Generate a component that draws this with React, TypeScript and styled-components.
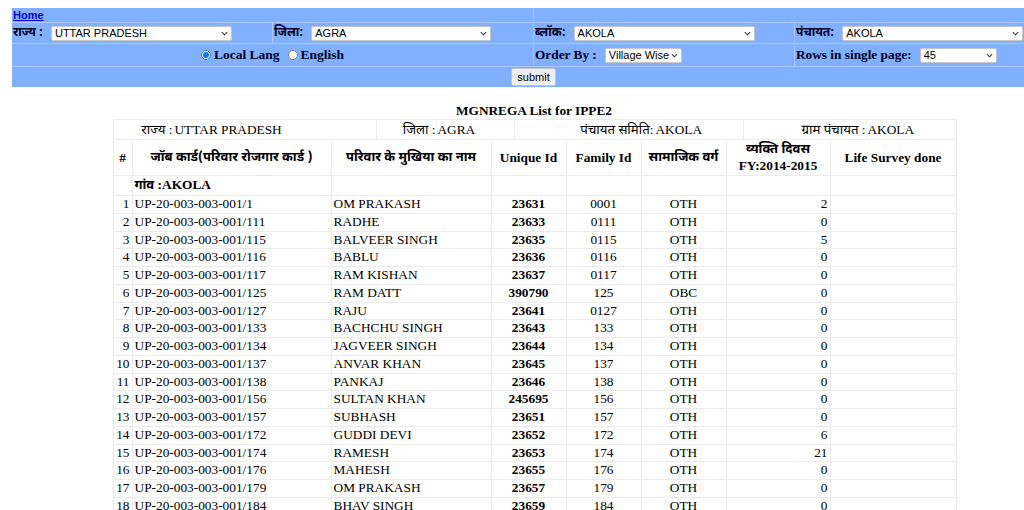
import React from "react";
import styled, { createGlobalStyle } from "styled-components";

interface IRow {
  card: string;
  name: string;
  uid: string;
  fid: string;
  varg: string;
  days: string;
}

const rows: IRow[] = [
  { card: "UP-20-003-003-001/1", name: "OM PRAKASH", uid: "23631", fid: "0001", varg: "OTH", days: "2" },
  { card: "UP-20-003-003-001/111", name: "RADHE", uid: "23633", fid: "0111", varg: "OTH", days: "0" },
  { card: "UP-20-003-003-001/115", name: "BALVEER SINGH", uid: "23635", fid: "0115", varg: "OTH", days: "5" },
  { card: "UP-20-003-003-001/116", name: "BABLU", uid: "23636", fid: "0116", varg: "OTH", days: "0" },
  { card: "UP-20-003-003-001/117", name: "RAM KISHAN", uid: "23637", fid: "0117", varg: "OTH", days: "0" },
  { card: "UP-20-003-003-001/125", name: "RAM DATT", uid: "390790", fid: "125", varg: "OBC", days: "0" },
  { card: "UP-20-003-003-001/127", name: "RAJU", uid: "23641", fid: "0127", varg: "OTH", days: "0" },
  { card: "UP-20-003-003-001/133", name: "BACHCHU SINGH", uid: "23643", fid: "133", varg: "OTH", days: "0" },
  { card: "UP-20-003-003-001/134", name: "JAGVEER SINGH", uid: "23644", fid: "134", varg: "OTH", days: "0" },
  { card: "UP-20-003-003-001/137", name: "ANVAR KHAN", uid: "23645", fid: "137", varg: "OTH", days: "0" },
  { card: "UP-20-003-003-001/138", name: "PANKAJ", uid: "23646", fid: "138", varg: "OTH", days: "0" },
  { card: "UP-20-003-003-001/156", name: "SULTAN KHAN", uid: "245695", fid: "156", varg: "OTH", days: "0" },
  { card: "UP-20-003-003-001/157", name: "SUBHASH", uid: "23651", fid: "157", varg: "OTH", days: "0" },
  { card: "UP-20-003-003-001/172", name: "GUDDI DEVI", uid: "23652", fid: "172", varg: "OTH", days: "6" },
  { card: "UP-20-003-003-001/174", name: "RAMESH", uid: "23653", fid: "174", varg: "OTH", days: "21" },
  { card: "UP-20-003-003-001/176", name: "MAHESH", uid: "23655", fid: "176", varg: "OTH", days: "0" },
  { card: "UP-20-003-003-001/179", name: "OM PRAKASH", uid: "23657", fid: "179", varg: "OTH", days: "0" },
  { card: "UP-20-003-003-001/184", name: "BHAV SINGH", uid: "23659", fid: "184", varg: "OTH", days: "0" },
  { card: "UP-20-003-003-001/185", name: "DHARMVEER", uid: "23660", fid: "185", varg: "OTH", days: "0" },
];

// native-looking select with our own little chevron
const Dropdown = ({ w, value }: { w: number; value: string }) => (
  <SelectWrap w={w}>
    <Select defaultValue={value}>
      <option value={value}>{value}</option>
    </Select>
    <Chevron viewBox="0 0 8 5" width="7" height="5">
      <path d="M1 1 L4 4 L7 1" fill="none" stroke="#3a3a3a" strokeWidth="1.3" />
    </Chevron>
  </SelectWrap>
);

const App = () => {
  return (
    <Page>
      <GlobalStyle />
      <FilterBar>
        <FilterCell span={2} h={15}>
          <HomeLink href="#">Home</HomeLink>
        </FilterCell>
        <FilterCell span={2} h={15} />

        <FilterCell h={21}>
          <Label>राज्य :</Label>
          <Dropdown w={181} value="UTTAR PRADESH" />
        </FilterCell>
        <FilterCell h={21}>
          <Label>जिला:</Label>
          <Dropdown w={180} value="AGRA" />
        </FilterCell>
        <FilterCell h={21}>
          <Label>ब्लॉक:</Label>
          <Dropdown w={181} value="AKOLA" />
        </FilterCell>
        <FilterCell h={21}>
          <Label>पंचायत:</Label>
          <Dropdown w={181} value="AKOLA" />
        </FilterCell>

        <FilterCell span={2} h={23} center>
          <RadioLabel>
            <Radio type="radio" name="lang" defaultChecked />
            Local Lang
          </RadioLabel>
          <RadioLabel>
            <Radio type="radio" name="lang" />
            English
          </RadioLabel>
        </FilterCell>
        <FilterCell h={23}>
          <BoldLabel>Order By :</BoldLabel>
          <Dropdown w={77} value="Village Wise" />
        </FilterCell>
        <FilterCell h={23}>
          <BoldLabel>Rows in single page:</BoldLabel>
          <Dropdown w={77} value="45" />
        </FilterCell>

        <FilterCell span={4} h={20} center last>
          <SubmitBtn type="button">submit</SubmitBtn>
        </FilterCell>
      </FilterBar>

      <Report>
        <Title>MGNREGA List for IPPE2</Title>
        <ListTable>
          <colgroup>
            <col style={{ width: 19 }} />
            <col style={{ width: 199 }} />
            <col style={{ width: 160 }} />
            <col style={{ width: 75 }} />
            <col style={{ width: 75 }} />
            <col style={{ width: 85 }} />
            <col style={{ width: 104 }} />
            <col style={{ width: 126 }} />
          </colgroup>
          <tbody>
            <tr>
              <InfoCell colSpan={8}>
                <InfoRow>
                  <InfoLabel>राज्य :</InfoLabel>
                  <InfoValue>UTTAR PRADESH</InfoValue>
                  <InfoLabel>जिला :</InfoLabel>
                  <InfoValue>AGRA</InfoValue>
                  <InfoLabel>पंचायत समिति:</InfoLabel>
                  <InfoValue>AKOLA</InfoValue>
                  <InfoLabel>ग्राम पंचायत :</InfoLabel>
                  <InfoValue last>AKOLA</InfoValue>
                </InfoRow>
              </InfoCell>
            </tr>
            <tr>
              <Th>#</Th>
              <Th hindi>जॉब कार्ड(परिवार रोजगार कार्ड )</Th>
              <Th hindi>परिवार के मुखिया का नाम</Th>
              <Th>Unique Id</Th>
              <Th>Family Id</Th>
              <Th hindi>सामाजिक वर्ग</Th>
              <Th>
                <HindiLine>व्यक्ति दिवस</HindiLine>
                FY:2014-2015
              </Th>
              <Th>Life Survey done</Th>
            </tr>
            <tr>
              <VillageCell />
              <VillageCell>
                <HindiLine>गांव </HindiLine>:AKOLA
              </VillageCell>
              <VillageCell />
              <VillageCell />
              <VillageCell />
              <VillageCell />
              <VillageCell />
              <VillageCell />
            </tr>
            {rows.map((r, i) => (
              <tr key={r.card}>
                <Td align="right">{i + 1}</Td>
                <Td>{r.card}</Td>
                <Td>{r.name}</Td>
                <Td align="center" bold>
                  {r.uid}
                </Td>
                <Td align="center">{r.fid}</Td>
                <Td align="center">{r.varg}</Td>
                <Td align="right">{r.days}</Td>
                <Td></Td>
              </tr>
            ))}
          </tbody>
        </ListTable>
      </Report>
    </Page>
  );
};

export default App;

const GlobalStyle = createGlobalStyle`
  html, body {
    margin: 0;
    padding: 0;
    overflow: hidden;
    background: #fff;
  }
  body {
    font-family: "Liberation Serif", "Times New Roman", "Noto Sans Devanagari", serif;
    color: #000;
  }
`;

const Page = styled.div`
  width: 1044px;
  padding: 8px 0 0 12px;
`;

const FilterBar = styled.div`
  display: grid;
  grid-template-columns: repeat(4, 261px);
  background: #80b0ff;
  font-family: "Liberation Sans", Arial, sans-serif;
  color: #000022;
`;

const FilterCell = styled.div<{ span?: number; h: number; center?: boolean; last?: boolean }>`
  grid-column: span ${(p) => p.span || 1};
  height: ${(p) => p.h}px;
  box-sizing: border-box;
  display: flex;
  align-items: center;
  justify-content: ${(p) => (p.center ? "center" : "flex-start")};
  padding: 0 1px;
  border-right: 1px solid #a8c8ff;
  border-bottom: ${(p) => (p.last ? "none" : "1px solid #a8c8ff")};
`;

const HomeLink = styled.a`
  font-size: 11px;
  font-weight: bold;
  color: #0000cc;
  text-decoration: underline;
`;

const Label = styled.span`
  font-family: "Noto Sans Devanagari", "Noto Sans", sans-serif;
  font-size: 12px;
  font-weight: bold;
  margin-right: 8px;
  white-space: nowrap;
`;

const BoldLabel = styled.span`
  font-family: "Liberation Serif", serif;
  font-size: 13.3px;
  font-weight: bold;
  margin-right: 8px;
  white-space: nowrap;
`;

const SelectWrap = styled.span<{ w: number }>`
  position: relative;
  display: inline-flex;
  width: ${(p) => p.w}px;
  height: 15px;
  flex-shrink: 0;
`;

const Select = styled.select`
  appearance: none;
  -webkit-appearance: none;
  width: 100%;
  height: 100%;
  margin: 0;
  padding: 0 12px 0 3px;
  font-family: "Liberation Sans", Arial, sans-serif;
  font-size: 11px;
  line-height: 13px;
  color: #000;
  background: #fff;
  border: 1px solid #c6c6c6;
  border-radius: 2px;
  box-sizing: border-box;
`;

const Chevron = styled.svg`
  position: absolute;
  right: 4px;
  top: 5px;
  pointer-events: none;
`;

const RadioLabel = styled.label`
  display: flex;
  align-items: center;
  font-family: "Liberation Serif", serif;
  font-size: 13.5px;
  font-weight: bold;
  margin-right: 4px;
`;

const Radio = styled.input`
  width: 10px;
  height: 10px;
  margin: 0 3px 0 4px;
  accent-color: #1a73e8;
`;

const SubmitBtn = styled.button`
  height: 18px;
  width: 45px;
  padding: 0;
  font-family: "Liberation Sans", Arial, sans-serif;
  font-size: 11px;
  color: #000;
  background: #efefef;
  border: 1px solid #c4c4c4;
  border-radius: 2px;
`;

const Report = styled.div`
  width: 843px;
  margin: 0 auto;
`;

const Title = styled.div`
  margin-top: 16px;
  text-align: center;
  font-size: 13.3px;
  font-weight: bold;
  line-height: 16px;
`;

const ListTable = styled.table`
  width: 843px;
  table-layout: fixed;
  border-collapse: collapse;
  font-size: 13.33px;

  td,
  th {
    border: 1px solid #ebebeb;
    padding: 0 2px;
  }
`;

const InfoCell = styled.td`
  && {
    padding: 0;
  }
`;

const InfoRow = styled.div`
  display: grid;
  grid-template-columns: 60px 203px 60px 78px 140px 89px 123px 90px;
  height: 19px;
  align-items: center;
`;

const InfoLabel = styled.div`
  text-align: right;
  font-family: "Liberation Serif", "Noto Sans Devanagari", serif;
  font-size: 13.3px;
  white-space: nowrap;
  height: 100%;
  line-height: 19px;
  border-right: 1px solid #f2f2f2;
`;

const InfoValue = styled.div<{ last?: boolean }>`
  text-align: left;
  font-size: 13.3px;
  height: 100%;
  line-height: 19px;
  padding-left: 1px;
  white-space: nowrap;
  border-right: ${(p) => (p.last ? "none" : "1px solid #ebebeb")};
`;

const Th = styled.th<{ hindi?: boolean }>`
  height: 35px;
  font-weight: bold;
  text-align: center;
  vertical-align: middle;
  font-family: ${(p) =>
    p.hindi ? `"Noto Sans Devanagari", "Noto Sans", sans-serif` : `"Liberation Serif", serif`};
  font-size: ${(p) => (p.hindi ? "13px" : "13.33px")};
  line-height: 16px;
`;

const HindiLine = styled.span`
  display: inline;
  font-family: "Noto Sans Devanagari", "Noto Sans", sans-serif;
  font-size: 13px;
  font-weight: bold;
  th > & {
    display: block;
  }
`;

const VillageCell = styled.td`
  height: 18px;
  font-weight: bold;
  line-height: 18px;
`;

const Td = styled.td<{ align?: string; bold?: boolean }>`
  text-align: ${(p) => p.align || "left"};
  font-weight: ${(p) => (p.bold ? "bold" : "normal")};
  line-height: 16.76px;
  white-space: nowrap;
`;
